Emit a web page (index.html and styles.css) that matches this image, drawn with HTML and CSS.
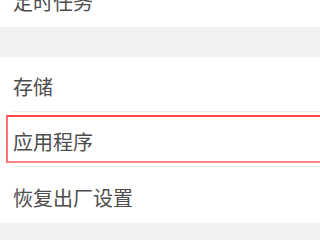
FILE: index.html
```html
<!DOCTYPE html>
<html lang="zh">
<head>
<meta charset="utf-8">
<link rel="stylesheet" href="styles.css">
</head>
<body>
<div class="page">
  <div class="group">
    <div class="row">定时任务</div>
  </div>
  <div class="gap"></div>
  <div class="group">
    <div class="row sep">存储</div>
    <div class="row sep focused">应用程序</div>
    <div class="row last">恢复出厂设置</div>
  </div>
  <div class="gap end"></div>
</div>
</body>
</html>
```
FILE: styles.css
```css
html, body {
  margin: 0;
  padding: 0;
  background: #ffffff;
  overflow: hidden;
}
.page {
  width: 320px;
  margin-top: -28px;
  font-family: "Noto Sans CJK SC", "Noto Sans", sans-serif;
}
.group {
  background: #ffffff;
}
.gap {
  height: 30px;
  background: #f2f2f2;
}
.gap.end {
  height: 17px;
}
.row {
  position: relative;
  box-sizing: border-box;
  height: 55px;
  display: flex;
  align-items: center;
  padding-left: 13px;
  padding-top: 3px;
  font-size: 20px;
  color: #4d4d4d;
}
.row.last {
  height: 56px;
  padding-top: 5px;
}
.row.sep::before {
  content: "";
  position: absolute;
  left: 13px;
  right: 0;
  bottom: 0;
  height: 1px;
  background: #ececec;
}
.row.focused::after {
  content: "";
  position: absolute;
  top: 3px;
  bottom: 4px;
  left: 6px;
  right: -10px;
  border: 2px solid #ff4a4a;
  border-bottom-color: #ff8585;
  border-left-color: #ff7070;
}
```
